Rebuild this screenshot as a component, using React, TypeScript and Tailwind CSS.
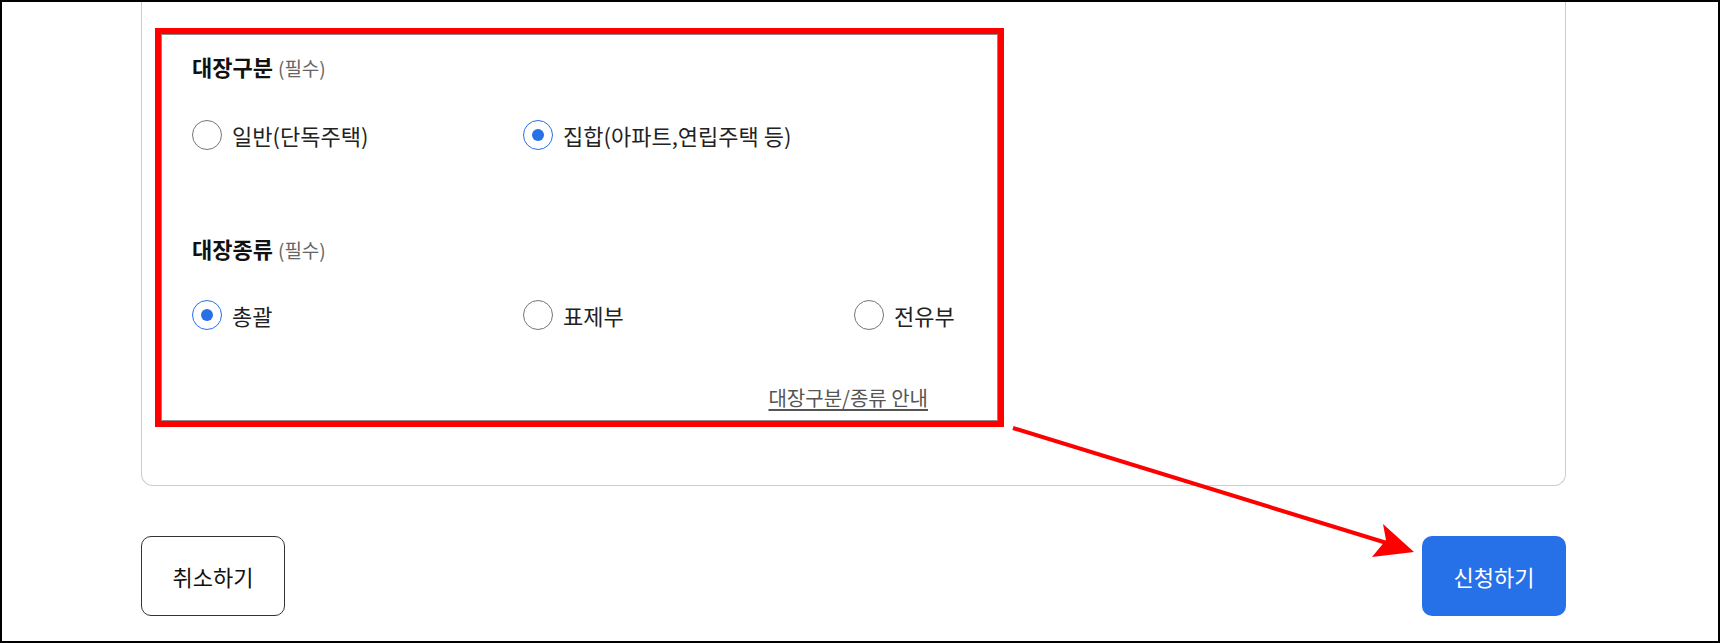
import { useState } from "react"

type Option = { value: string; label: string }

const ledgerGroups: Option[] = [
  { value: "general", label: "일반(단독주택)" },
  { value: "collective", label: "집합(아파트,연립주택 등)" },
]

const ledgerKinds: Option[] = [
  { value: "summary", label: "총괄" },
  { value: "title", label: "표제부" },
  { value: "exclusive", label: "전유부" },
]

function Radio({ checked, label, onClick }: { checked: boolean; label: string; onClick: () => void }) {
  return (
    <button type="button" onClick={onClick} className="flex items-center gap-[10px] h-[30px] text-left">
      {checked ? (
        <span className="w-[30px] h-[30px] rounded-full border-[1.5px] border-[#2670e8] flex items-center justify-center">
          <span className="w-[12px] h-[12px] rounded-full bg-[#2670e8]" />
        </span>
      ) : (
        <span className="w-[30px] h-[30px] rounded-full border border-[#767676]" />
      )}
      <span className="text-[22px] leading-[28px] text-[#222]">{label}</span>
    </button>
  )
}

export default function App() {
  const [group, setGroup] = useState("collective")
  const [kind, setKind] = useState("summary")

  return (
    <div className="relative w-[1720px] h-[643px] overflow-hidden bg-white border-2 border-black font-['Noto_Sans_CJK_KR',sans-serif]">
      {/* Form card (top edge scrolled out of view) */}
      <div className="ml-[139px] w-[1425px] border border-t-0 border-[#cccccc] rounded-b-[12px] px-[13px] pt-[26px] pb-[58px]">
        {/* Annotation box */}
        <div className="w-[849px] border-[6px] border-[#ff0000]">
          <div className="border border-[#8a8a8a] pl-[30px] pt-[17px] pb-[10px]">
            <h3 className="h-[28px] text-[22px] leading-[28px] font-bold text-[#111]">
              대장구분 <span className="text-[19px] font-normal text-[#666]">(필수)</span>
            </h3>
            <div className="mt-[40px] grid grid-cols-[331px_331px_auto]">
              {ledgerGroups.map((o) => (
                <Radio key={o.value} checked={group === o.value} label={o.label} onClick={() => setGroup(o.value)} />
              ))}
            </div>

            <h3 className="mt-[84px] h-[28px] text-[22px] leading-[28px] font-bold text-[#111]">
              대장종류 <span className="text-[19px] font-normal text-[#666]">(필수)</span>
            </h3>
            <div className="mt-[38px] grid grid-cols-[331px_331px_auto]">
              {ledgerKinds.map((o) => (
                <Radio key={o.value} checked={kind === o.value} label={o.label} onClick={() => setKind(o.value)} />
              ))}
            </div>

            <div className="mt-[56px] flex justify-end pr-[69px]">
              <a href="#" className="text-[20px] leading-[24px] text-[#555] underline underline-offset-[3px]">
                대장구분/종류 안내
              </a>
            </div>
          </div>
        </div>
      </div>

      {/* Actions */}
      <div className="ml-[139px] w-[1425px] mt-[50px] flex justify-between">
        <button type="button" className="w-[144px] h-[80px] rounded-[10px] border border-[#333] text-[22px] text-[#111] bg-white">
          취소하기
        </button>
        <button type="button" className="w-[144px] h-[80px] rounded-[10px] bg-[#2670e8] text-[22px] text-white">
          신청하기
        </button>
      </div>

      {/* Annotation arrow */}
      <svg className="absolute left-0 top-0 pointer-events-none" width="1720" height="643" viewBox="0 0 1720 643">
        <line x1="1011" y1="426" x2="1388" y2="542" stroke="#ff0000" strokeWidth="4" />
        <polygon points="1412,550 1381,522 1384,538 1370,555" fill="#ff0000" />
      </svg>
    </div>
  )
}
